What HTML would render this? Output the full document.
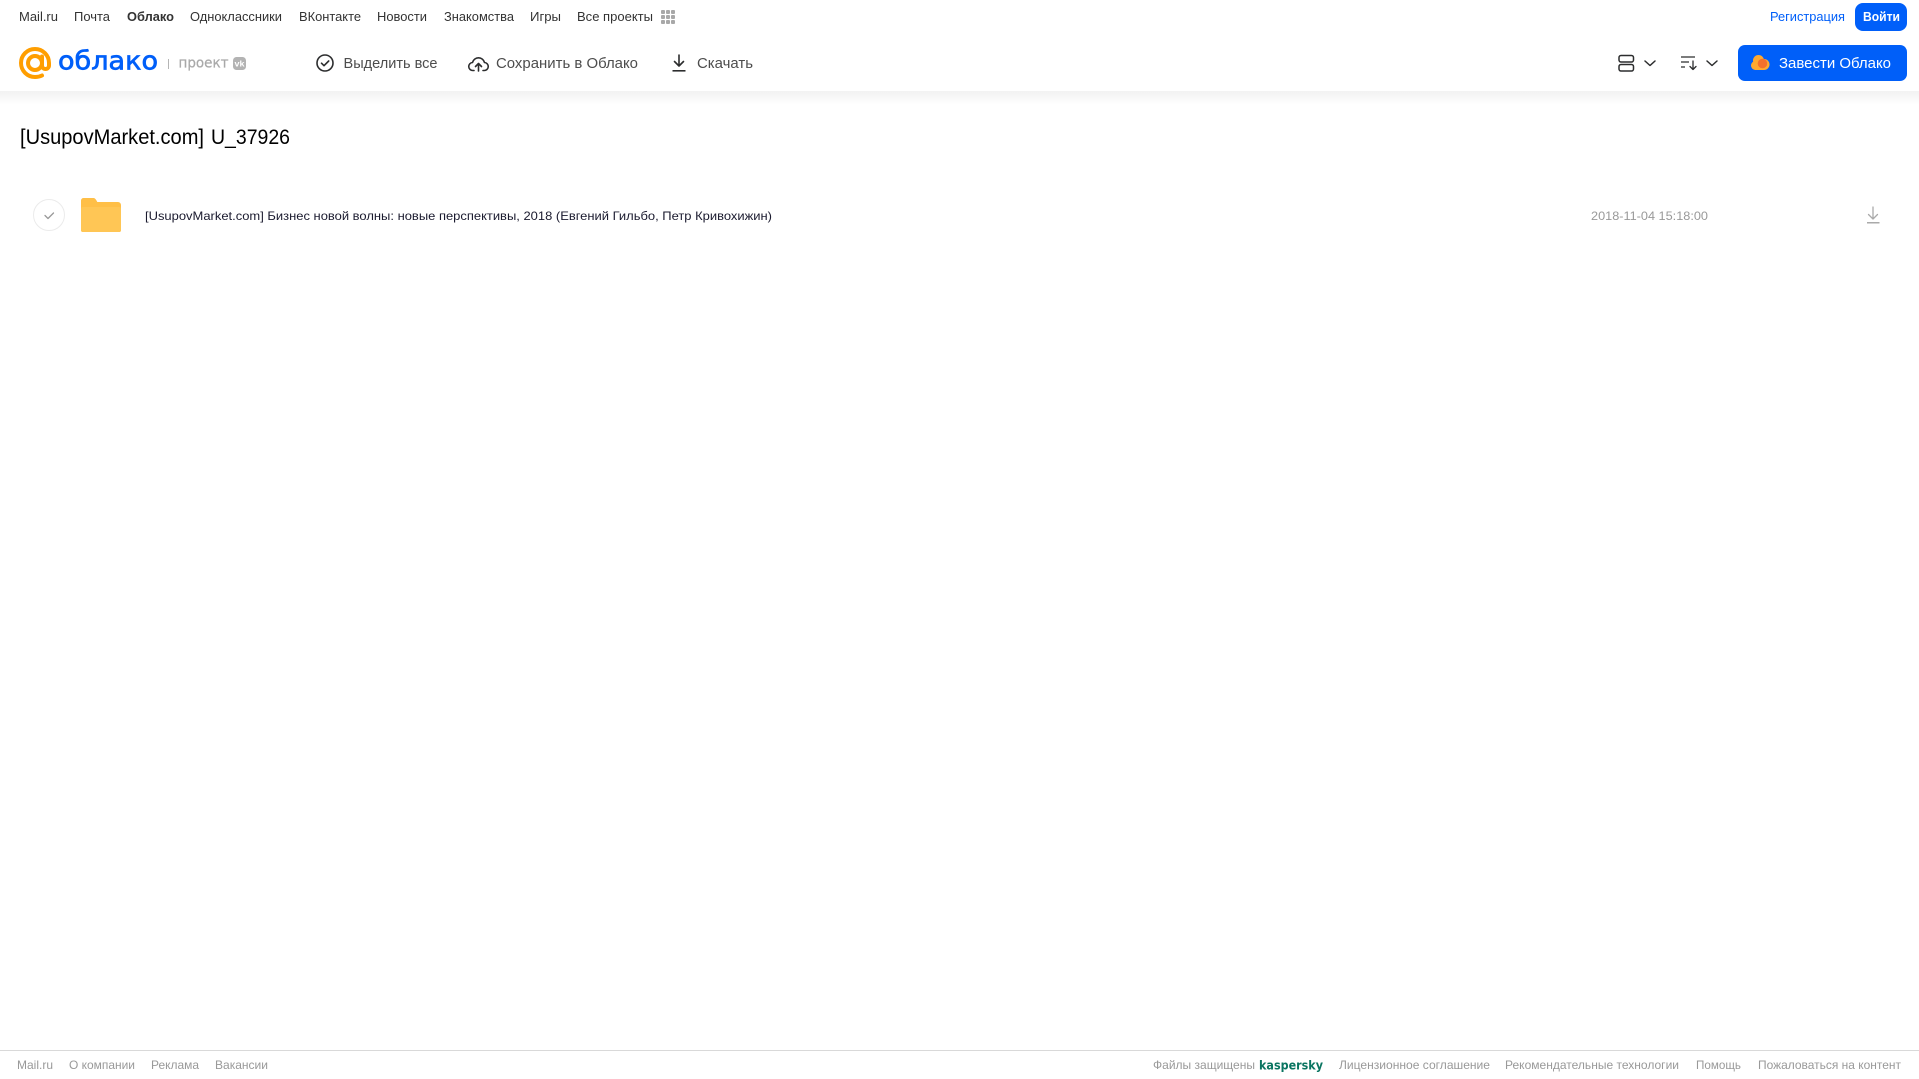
<!DOCTYPE html>
<html lang="ru">
<head>
<meta charset="utf-8">
<title>[UsupovMarket.com] U_37926</title>
<style>
html,body{margin:0;padding:0;background:#fff;width:1919px;height:1079px;overflow:hidden}
svg{display:block;position:absolute;left:0;top:0}
text{font-family:"Liberation Sans",Arial,sans-serif}
</style>
</head>
<body>
<svg width="1919" height="1079" viewBox="0 0 1919 1079" xmlns="http://www.w3.org/2000/svg">
<defs>
<linearGradient id="sh" x1="0" y1="0" x2="0" y2="1"><stop offset="0" stop-color="#f2f2f2"/><stop offset="1" stop-color="#fff"/></linearGradient>
</defs>
<rect width="1919" height="1079" fill="#fff"/>
<rect x="0" y="91" width="1919" height="14" fill="url(#sh)"/>

<!-- top nav -->
<g font-size="13" fill="#333">
<text x="19" y="21" textLength="39" lengthAdjust="spacingAndGlyphs">Mail.ru</text>
<text x="74" y="21" textLength="36" lengthAdjust="spacingAndGlyphs">Почта</text>
<text x="127" y="21" textLength="47" lengthAdjust="spacingAndGlyphs" font-weight="700">Облако</text>
<text x="190" y="21" textLength="92" lengthAdjust="spacingAndGlyphs">Одноклассники</text>
<text x="299" y="21" textLength="62" lengthAdjust="spacingAndGlyphs">ВКонтакте</text>
<text x="377" y="21" textLength="50" lengthAdjust="spacingAndGlyphs">Новости</text>
<text x="444" y="21" textLength="70" lengthAdjust="spacingAndGlyphs">Знакомства</text>
<text x="530" y="21" textLength="31" lengthAdjust="spacingAndGlyphs">Игры</text>
<text x="577" y="21" textLength="76" lengthAdjust="spacingAndGlyphs">Все проекты</text>
</g>
<g fill="#a8a8a8">
<rect x="661" y="10" width="4" height="4" rx="1"/><rect x="666" y="10" width="4" height="4" rx="1"/><rect x="671" y="10" width="4" height="4" rx="1"/>
<rect x="661" y="15" width="4" height="4" rx="1"/><rect x="666" y="15" width="4" height="4" rx="1"/><rect x="671" y="15" width="4" height="4" rx="1"/>
<rect x="661" y="20" width="4" height="4" rx="1"/><rect x="666" y="20" width="4" height="4" rx="1"/><rect x="671" y="20" width="4" height="4" rx="1"/>
</g>
<text x="1770" y="21" font-size="13" fill="#005ff9" textLength="75" lengthAdjust="spacingAndGlyphs">Регистрация</text>
<rect x="1855" y="3" width="52" height="28" rx="8" fill="#005ff9"/>
<text x="1863" y="21" font-size="13" font-weight="700" fill="#fff" textLength="37" lengthAdjust="spacingAndGlyphs">Войти</text>

<!-- logo -->
<g fill="none" stroke="#ff9e00" stroke-width="4">
<circle cx="35" cy="63" r="7"/>
<path d="M42 56.500v9a3.500 3.500 0 0 0 7 0V63a14 14 0 1 0-14 14c2.800 0 5-.5 7-1.500" stroke-linecap="round"/>
</g>
<text x="58" y="69.500" font-size="26" fill="#005ff9" textLength="100" lengthAdjust="spacingAndGlyphs" stroke="#005ff9" stroke-width=".7" style="font-family:'DejaVu Sans',sans-serif">облако</text>
<rect x="168" y="59" width="1" height="10" fill="#b5b5b5"/>
<text x="178.500" y="67.500" font-size="14" fill="#a9a9a9" textLength="50" lengthAdjust="spacingAndGlyphs" stroke="#a9a9a9" stroke-width=".25" style="font-family:'DejaVu Sans',sans-serif">проект</text>
<rect x="233" y="57" width="13" height="13" rx="3.500" fill="#b3b3b3"/>
<text x="234.500" y="66.500" font-size="8" font-weight="700" fill="#fff" textLength="10" lengthAdjust="spacingAndGlyphs">vk</text>

<!-- actions -->
<circle cx="325" cy="63" r="8" fill="none" stroke="#2c2d2e" stroke-width="1.600"/>
<path d="M321.500 63.200l2.500 2.500 4.700-4.700" fill="none" stroke="#2c2d2e" stroke-width="1.600" stroke-linecap="round" stroke-linejoin="round"/>
<text x="343.500" y="68" font-size="15" fill="#4d4d4d" textLength="94" lengthAdjust="spacingAndGlyphs">Выделить все</text>

<path d="M474 70.500h-1a4 4 0 0 1-.5-8a6.200 6.200 0 0 1 12 0a4 4 0 0 1-.5 8h-1" fill="none" stroke="#2c2d2e" stroke-width="1.600" stroke-linecap="round" stroke-linejoin="round"/>
<path d="M478.500 71v-7.500M475.500 66.500l3-3 3 3" fill="none" stroke="#2c2d2e" stroke-width="1.600" stroke-linecap="round" stroke-linejoin="round"/>
<text x="496" y="68" font-size="15" fill="#4d4d4d" textLength="142" lengthAdjust="spacingAndGlyphs">Сохранить в Облако</text>

<path d="M679 55v11M674.500 61.500l4.500 4.500 4.500-4.500" fill="none" stroke="#2c2d2e" stroke-width="1.600" stroke-linecap="round" stroke-linejoin="round"/>
<rect x="672.500" y="70" width="13" height="1.600" fill="#2c2d2e"/>
<text x="697" y="68" font-size="15" fill="#4d4d4d" textLength="56" lengthAdjust="spacingAndGlyphs">Скачать</text>

<!-- view / sort -->
<g fill="none" stroke="#2c2d2e" stroke-width="1.500">
<rect x="1619" y="55.500" width="14.500" height="6.500" rx="2"/>
<rect x="1619" y="64.500" width="14.500" height="6.500" rx="2"/>
<path d="M1645 61l5 4.500 5-4.500" stroke-linecap="round" stroke-linejoin="round"/>
<path d="M1707 61l5 4.500 5-4.500" stroke-linecap="round" stroke-linejoin="round"/>
<path d="M1681 57h14M1681 62h8M1681 67h4" stroke-width="1.300"/>
<path d="M1693 61v8.500M1690 66.500l3 3 3-3" stroke-width="1.300" stroke-linecap="round" stroke-linejoin="round"/>
</g>

<!-- cta -->
<rect x="1738" y="45" width="169" height="36" rx="7" fill="#005ff9"/>
<g fill="#ffa930">
<circle cx="1758.500" cy="60.500" r="5.500"/>
<circle cx="1755.500" cy="65.500" r="4.500"/>
<circle cx="1764" cy="64.500" r="5.500"/>
<rect x="1755" y="64" width="9" height="6"/>
</g>
<circle cx="1762.500" cy="63.500" r="4.800" fill="#f4702c"/>
<text x="1779" y="68" font-size="15" fill="#fff" textLength="112" lengthAdjust="spacingAndGlyphs">Завести Облако</text>

<!-- title -->
<text x="20" y="144" font-size="21" fill="#000" textLength="184" lengthAdjust="spacingAndGlyphs">[UsupovMarket.com]</text>
<text x="211" y="144" font-size="21" fill="#000" textLength="79" lengthAdjust="spacingAndGlyphs">U_37926</text>

<!-- row -->
<circle cx="49" cy="215" r="15.500" fill="#fff" stroke="#ebebeb" stroke-width="1"/>
<path d="M45 215.500l3 3 5.500-5.500" fill="none" stroke="#999" stroke-width="1.300" stroke-linecap="round" stroke-linejoin="round"/>
<path d="M81 200.500a2.500 2.500 0 0 1 2.500-2.500h9.500c2 0 2.500 1 3.500 2.500l.8 1.500h20.700a3 3 0 0 1 3 3V230a2 2 0 0 1-2 2H83a2 2 0 0 1-2-2z" fill="#ffbf47"/>
<rect x="81" y="207" width="40" height="25" rx="2" fill="#ffc655"/>
<text x="145" y="220" font-size="12" fill="#1a1a2e" textLength="627" lengthAdjust="spacingAndGlyphs">[UsupovMarket.com] Бизнес новой волны: новые перспективы, 2018 (Евгений Гильбо, Петр Кривохижин)</text>
<text x="1591" y="220" font-size="12" fill="#999" textLength="117" lengthAdjust="spacingAndGlyphs">2018-11-04 15:18:00</text>
<path d="M1873 207v12M1868.500 214.500l4.500 4.500 4.500-4.500" fill="none" stroke="#aaa" stroke-width="1.300" stroke-linecap="round" stroke-linejoin="round"/>
<rect x="1867" y="222" width="12.500" height="1.500" fill="#aaa"/>

<!-- footer -->
<rect x="0" y="1050" width="1919" height="1" fill="#d9d9d9"/>
<g font-size="12" fill="#999">
<text x="17" y="1069" textLength="36" lengthAdjust="spacingAndGlyphs">Mail.ru</text>
<text x="69" y="1069" textLength="66" lengthAdjust="spacingAndGlyphs">О компании</text>
<text x="151" y="1069" textLength="48" lengthAdjust="spacingAndGlyphs">Реклама</text>
<text x="215" y="1069" textLength="53" lengthAdjust="spacingAndGlyphs">Вакансии</text>
<text x="1153" y="1069" textLength="102" lengthAdjust="spacingAndGlyphs">Файлы защищены</text>
<text x="1339" y="1069" textLength="151" lengthAdjust="spacingAndGlyphs">Лицензионное соглашение</text>
<text x="1505" y="1069" textLength="174" lengthAdjust="spacingAndGlyphs">Рекомендательные технологии</text>
<text x="1696" y="1069" textLength="45" lengthAdjust="spacingAndGlyphs">Помощь</text>
<text x="1758" y="1069" textLength="143" lengthAdjust="spacingAndGlyphs">Пожаловаться на контент</text>
</g>
<text x="1259" y="1069.500" font-size="12.500" font-weight="700" fill="#0a7561" textLength="64" lengthAdjust="spacingAndGlyphs" style="font-family:'DejaVu Sans',sans-serif">kaspersky</text>
</svg>
</body>
</html>
